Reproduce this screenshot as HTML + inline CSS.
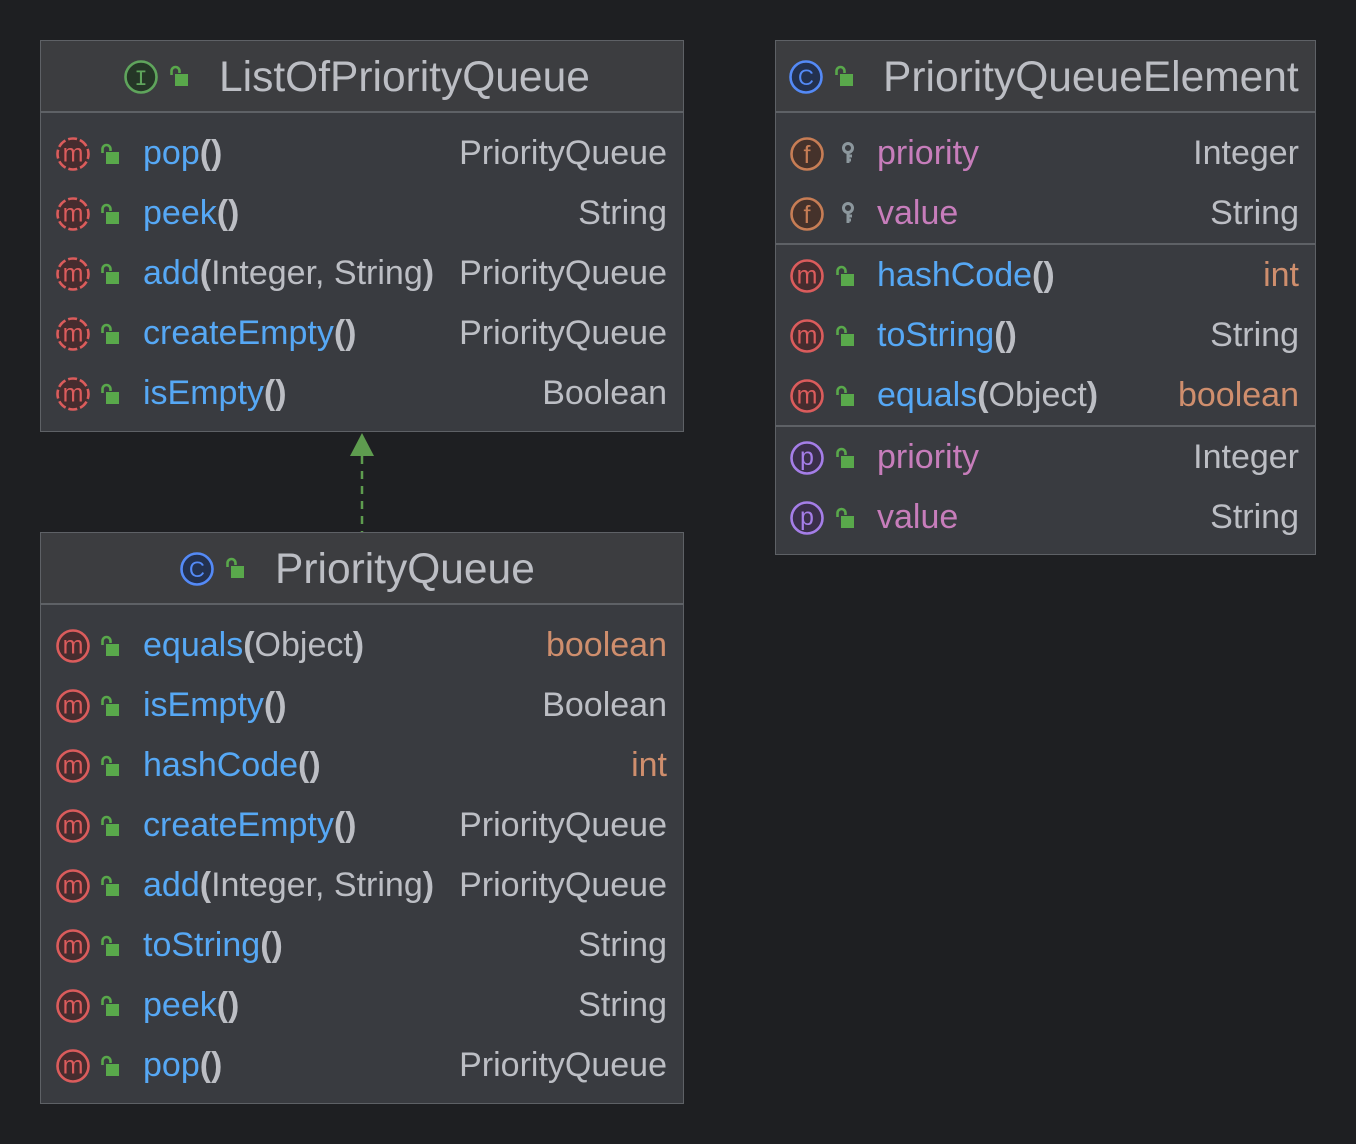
<!DOCTYPE html>
<html><head><meta charset="utf-8"><style>
body{margin:0;width:1356px;height:1144px;background:#1e1f22;position:relative;overflow:hidden;font-family:"Liberation Sans",sans-serif}
.box{position:absolute;background:#393b40;border:1px solid #5e6166;box-sizing:border-box}
.hdr{position:absolute;left:0;right:0;top:0;height:72px;background:#3c3d40;border-bottom:2px solid #5e6166;box-sizing:border-box}
.title{position:absolute;top:14px;font-size:42.5px;color:#bcbec4;line-height:46px;white-space:nowrap}
.row{position:absolute;left:0;right:0;height:60px}
.row svg{position:absolute;top:13px}
.nm{position:absolute;top:11px;font-size:34px;line-height:36px;color:#56a8f5;white-space:nowrap}
.nm b{color:#bcbec4;font-weight:bold}
.nm i{font-style:normal;color:#bcbec4}
.ty{position:absolute;top:11px;font-size:34px;line-height:36px;color:#bcbec4;white-space:nowrap}
.or{color:#cf8e6d}.pu{color:#c77dbb}
.div{position:absolute;left:0;right:0;height:2px;background:#5e6166}
</style></head><body>

<svg width="0" height="0" style="position:absolute">
<defs>
<g id="lock"><path d="M2.5 10 V6 a4 4 0 0 1 8 0 V8" fill="none" stroke="#59a84b" stroke-width="2.6"/><rect x="6" y="9" width="13" height="12" fill="#59a84b"/></g>
<g id="m"><circle cx="17" cy="17" r="15.5" fill="#462c2e" stroke="#db5c5c" stroke-width="2.6"/><text x="17" y="24.5" text-anchor="middle" font-family="Liberation Sans,sans-serif" font-size="25" fill="#db5c5c">m</text></g>
<g id="ma"><circle cx="17" cy="17" r="15.5" fill="#462c2e" stroke="#db5c5c" stroke-width="2.6" stroke-dasharray="9 3" stroke-dashoffset="4"/><text x="17" y="24.5" text-anchor="middle" font-family="Liberation Sans,sans-serif" font-size="25" fill="#db5c5c">m</text></g>
<g id="f"><circle cx="17" cy="17" r="15.5" fill="#45322b" stroke="#c77d55" stroke-width="2.6"/><text x="17" y="26" text-anchor="middle" font-family="Liberation Sans,sans-serif" font-size="25" fill="#c77d55">f</text></g>
<g id="p"><circle cx="17" cy="17" r="15.5" fill="#3a2f4a" stroke="#a57ee8" stroke-width="2.6"/><text x="17" y="24" text-anchor="middle" font-family="Liberation Sans,sans-serif" font-size="25" fill="#a57ee8">p</text></g>
<g id="key"><circle cx="8" cy="6" r="4.5" fill="none" stroke="#8c979d" stroke-width="3"/><path d="M8 10 V21 M8 14 H12 M8 18 H11" stroke="#8c979d" stroke-width="3" fill="none"/></g>
</defs></svg>

<!-- Box 1 -->
<div class="box" style="left:40px;top:40px;width:644px;height:392px">
 <div class="hdr"></div>
 <svg style="position:absolute;left:83px;top:19px" width="34" height="34"><circle cx="17" cy="17" r="15.5" fill="#253627" stroke="#5fa55c" stroke-width="2.6"/><text x="17" y="25" text-anchor="middle" font-family="Liberation Mono,monospace" font-size="22" fill="#5fa55c">I</text></svg>
 <svg style="position:absolute;left:128px;top:24px" width="22" height="22"><use href="#lock"/></svg>
 <div class="title" style="left:178px">ListOfPriorityQueue</div>
 <div class="row" style="top:83px"><svg style="left:15px" width="34" height="34"><use href="#ma"/></svg><svg style="left:59px;top:19px" width="22" height="22"><use href="#lock"/></svg><div class="nm" style="left:102px">pop<b>()</b></div><div class="ty" style="right:16px">PriorityQueue</div></div>
 <div class="row" style="top:143px"><svg style="left:15px" width="34" height="34"><use href="#ma"/></svg><svg style="left:59px;top:19px" width="22" height="22"><use href="#lock"/></svg><div class="nm" style="left:102px">peek<b>()</b></div><div class="ty" style="right:16px">String</div></div>
 <div class="row" style="top:203px"><svg style="left:15px" width="34" height="34"><use href="#ma"/></svg><svg style="left:59px;top:19px" width="22" height="22"><use href="#lock"/></svg><div class="nm" style="left:102px">add<b>(</b><i>Integer, String</i><b>)</b></div><div class="ty" style="right:16px">PriorityQueue</div></div>
 <div class="row" style="top:263px"><svg style="left:15px" width="34" height="34"><use href="#ma"/></svg><svg style="left:59px;top:19px" width="22" height="22"><use href="#lock"/></svg><div class="nm" style="left:102px">createEmpty<b>()</b></div><div class="ty" style="right:16px">PriorityQueue</div></div>
 <div class="row" style="top:323px"><svg style="left:15px" width="34" height="34"><use href="#ma"/></svg><svg style="left:59px;top:19px" width="22" height="22"><use href="#lock"/></svg><div class="nm" style="left:102px">isEmpty<b>()</b></div><div class="ty" style="right:16px">Boolean</div></div>
</div>

<!-- arrow -->
<svg style="position:absolute;left:340px;top:430px" width="44" height="104">
 <polygon points="22,3 10,26 34,26" fill="#5e9c4f"/>
 <line x1="22" y1="26" x2="22" y2="104" stroke="#5e9c4f" stroke-width="2.5" stroke-dasharray="8 7"/>
</svg>

<!-- Box 2 -->
<div class="box" style="left:40px;top:532px;width:644px;height:572px">
 <div class="hdr"></div>
 <svg style="position:absolute;left:139px;top:19px" width="34" height="34"><circle cx="17" cy="17" r="15.5" fill="#23314f" stroke="#548af7" stroke-width="2.6"/><text x="17" y="25" text-anchor="middle" font-family="Liberation Sans,sans-serif" font-size="22" fill="#548af7">C</text></svg>
 <svg style="position:absolute;left:184px;top:24px" width="22" height="22"><use href="#lock"/></svg>
 <div class="title" style="left:234px">PriorityQueue</div>
 <div class="row" style="top:83px"><svg style="left:15px" width="34" height="34"><use href="#m"/></svg><svg style="left:59px;top:19px" width="22" height="22"><use href="#lock"/></svg><div class="nm" style="left:102px">equals<b>(</b><i>Object</i><b>)</b></div><div class="ty or" style="right:16px">boolean</div></div>
 <div class="row" style="top:143px"><svg style="left:15px" width="34" height="34"><use href="#m"/></svg><svg style="left:59px;top:19px" width="22" height="22"><use href="#lock"/></svg><div class="nm" style="left:102px">isEmpty<b>()</b></div><div class="ty" style="right:16px">Boolean</div></div>
 <div class="row" style="top:203px"><svg style="left:15px" width="34" height="34"><use href="#m"/></svg><svg style="left:59px;top:19px" width="22" height="22"><use href="#lock"/></svg><div class="nm" style="left:102px">hashCode<b>()</b></div><div class="ty or" style="right:16px">int</div></div>
 <div class="row" style="top:263px"><svg style="left:15px" width="34" height="34"><use href="#m"/></svg><svg style="left:59px;top:19px" width="22" height="22"><use href="#lock"/></svg><div class="nm" style="left:102px">createEmpty<b>()</b></div><div class="ty" style="right:16px">PriorityQueue</div></div>
 <div class="row" style="top:323px"><svg style="left:15px" width="34" height="34"><use href="#m"/></svg><svg style="left:59px;top:19px" width="22" height="22"><use href="#lock"/></svg><div class="nm" style="left:102px">add<b>(</b><i>Integer, String</i><b>)</b></div><div class="ty" style="right:16px">PriorityQueue</div></div>
 <div class="row" style="top:383px"><svg style="left:15px" width="34" height="34"><use href="#m"/></svg><svg style="left:59px;top:19px" width="22" height="22"><use href="#lock"/></svg><div class="nm" style="left:102px">toString<b>()</b></div><div class="ty" style="right:16px">String</div></div>
 <div class="row" style="top:443px"><svg style="left:15px" width="34" height="34"><use href="#m"/></svg><svg style="left:59px;top:19px" width="22" height="22"><use href="#lock"/></svg><div class="nm" style="left:102px">peek<b>()</b></div><div class="ty" style="right:16px">String</div></div>
 <div class="row" style="top:503px"><svg style="left:15px" width="34" height="34"><use href="#m"/></svg><svg style="left:59px;top:19px" width="22" height="22"><use href="#lock"/></svg><div class="nm" style="left:102px">pop<b>()</b></div><div class="ty" style="right:16px">PriorityQueue</div></div>
</div>

<!-- Box 3 -->
<div class="box" style="left:775px;top:40px;width:541px;height:515px">
 <div class="hdr"></div>
 <svg style="position:absolute;left:13px;top:19px" width="34" height="34"><circle cx="17" cy="17" r="15.5" fill="#23314f" stroke="#548af7" stroke-width="2.6"/><text x="17" y="25" text-anchor="middle" font-family="Liberation Sans,sans-serif" font-size="22" fill="#548af7">C</text></svg>
 <svg style="position:absolute;left:58px;top:24px" width="22" height="22"><use href="#lock"/></svg>
 <div class="title" style="left:107px">PriorityQueueElement</div>
 <div class="row" style="top:83px"><svg style="left:14px" width="34" height="34"><use href="#f"/></svg><svg style="left:64px;top:18px" width="16" height="24"><use href="#key"/></svg><div class="nm pu" style="left:101px">priority</div><div class="ty" style="right:16px">Integer</div></div>
 <div class="row" style="top:143px"><svg style="left:14px" width="34" height="34"><use href="#f"/></svg><svg style="left:64px;top:18px" width="16" height="24"><use href="#key"/></svg><div class="nm pu" style="left:101px">value</div><div class="ty" style="right:16px">String</div></div>
 <div class="div" style="top:202px"></div>
 <div class="row" style="top:205px"><svg style="left:14px" width="34" height="34"><use href="#m"/></svg><svg style="left:59px;top:19px" width="22" height="22"><use href="#lock"/></svg><div class="nm" style="left:101px">hashCode<b>()</b></div><div class="ty or" style="right:16px">int</div></div>
 <div class="row" style="top:265px"><svg style="left:14px" width="34" height="34"><use href="#m"/></svg><svg style="left:59px;top:19px" width="22" height="22"><use href="#lock"/></svg><div class="nm" style="left:101px">toString<b>()</b></div><div class="ty" style="right:16px">String</div></div>
 <div class="row" style="top:325px"><svg style="left:14px" width="34" height="34"><use href="#m"/></svg><svg style="left:59px;top:19px" width="22" height="22"><use href="#lock"/></svg><div class="nm" style="left:101px">equals<b>(</b><i>Object</i><b>)</b></div><div class="ty or" style="right:16px">boolean</div></div>
 <div class="div" style="top:384px"></div>
 <div class="row" style="top:387px"><svg style="left:14px" width="34" height="34"><use href="#p"/></svg><svg style="left:59px;top:19px" width="22" height="22"><use href="#lock"/></svg><div class="nm pu" style="left:101px">priority</div><div class="ty" style="right:16px">Integer</div></div>
 <div class="row" style="top:447px"><svg style="left:14px" width="34" height="34"><use href="#p"/></svg><svg style="left:59px;top:19px" width="22" height="22"><use href="#lock"/></svg><div class="nm pu" style="left:101px">value</div><div class="ty" style="right:16px">String</div></div>
</div>

</body></html>
